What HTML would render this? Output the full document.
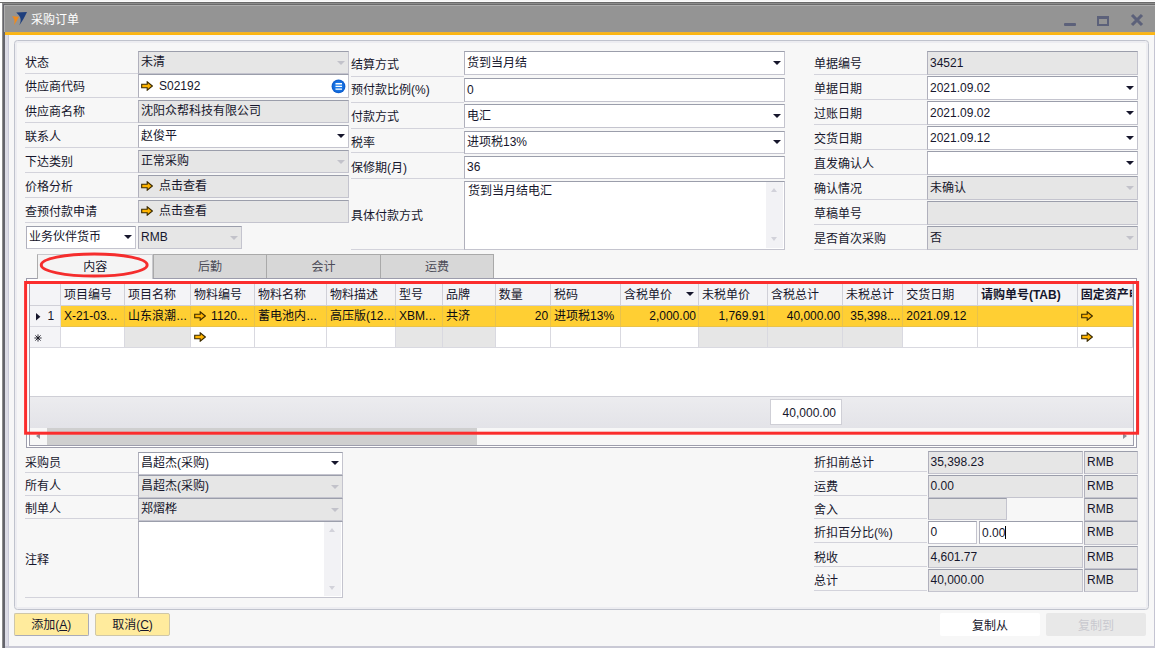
<!DOCTYPE html><html lang="zh-CN"><head><meta charset="utf-8"><title>采购订单</title><style>
*{box-sizing:border-box;margin:0;padding:0}
html,body{width:1155px;height:648px;overflow:hidden;background:#f7f7f7}
body{position:relative;font-family:"Liberation Sans","Noto Sans CJK SC",sans-serif;font-size:12px;color:#16162c;line-height:1}
.a{position:absolute}
.lbl{position:absolute;white-space:nowrap;border-bottom:1px solid #d3d3db;padding-top:5px}
.f{position:absolute;white-space:nowrap;overflow:hidden;border:1px solid #c4c4ce;border-top-color:#9b9eab;border-left-color:#b0b0bc;background:#fff;padding:4px 0 0 2px}
.d{background:#e6e6e6}
.arr{position:absolute;width:0;height:0;margin-left:-0.5px;border-left:4px solid transparent;border-right:4px solid transparent;border-top:4px solid #16162c}
.arr.g{border-top-color:#c2c2ca}
.tab{position:absolute;top:254px;height:24px;background:#d7d7d7;border:1px solid #a9a9a9;border-bottom:none;text-align:center;padding-top:6px;color:#4c4c58}
.th{position:absolute;top:283px;height:22.5px;background:#f4f4f7;border-right:1px solid #d0d0d8;border-bottom:1px solid #d0d0d8;padding:5.5px 0 0 3px;white-space:nowrap;overflow:hidden}
.td{position:absolute;height:21px;border-right:1px solid #d9d9e0;border-bottom:1px solid #d9d9e0;padding:4px 2px 0 3px;white-space:nowrap;overflow:hidden}
.sel{color:#0a0a12;background:#ffcf33;border-right-color:#e9c24a;border-bottom-color:#e9c24a}
.r{text-align:right}
.btn{position:absolute;text-align:center;padding-top:5px;border-radius:2px}
</style></head><body>
<svg width="0" height="0" style="position:absolute"><defs><linearGradient id="lg" x1="0" y1="0" x2="0" y2="1"><stop offset="0.15" stop-color="#ffdc00"/><stop offset="0.85" stop-color="#ff9800"/></linearGradient><radialGradient id="bg" cx="0.5" cy="0.5" r="0.5"><stop offset="0.5" stop-color="#1d7be9"/><stop offset="1" stop-color="#0a59cb"/></radialGradient></defs></svg>
<div class="a" style="left:0;top:0;width:1155px;height:2px;background:linear-gradient(#f1f1f1,#fff)"></div>
<div class="a" style="left:0;top:1.8px;width:1155px;height:1.1px;background:#6a6a6a"></div>
<div class="a" style="left:2px;top:2.9px;width:1153px;height:1px;background:#8c8c8c"></div>
<div class="a" style="left:3px;top:3.9px;width:1152px;height:1px;background:#6a6a6a"></div>
<div class="a" style="left:4px;top:4.9px;width:1151px;height:1px;background:#adadad"></div>
<div class="a" style="left:4.7px;top:5.7px;width:1151px;height:26px;background:#949494"></div>
<div class="a" style="left:4.7px;top:31.5px;width:1151px;height:3.5px;background:linear-gradient(#eeb432,#fdb50f 60%)"></div>
<div class="a" style="left:0;top:3px;width:2px;height:645px;background:#fff"></div>
<div class="a" style="left:2px;top:2.9px;width:1.1px;height:646px;background:#8c8c8c"></div>
<div class="a" style="left:3px;top:3.9px;width:1.7px;height:645px;background:#64646c"></div>
<div class="a" style="left:4px;top:4.9px;width:0.8px;height:27px;background:#adadad"></div>
<div class="a" style="left:4.7px;top:35px;width:4.3px;height:613px;background:#dcdce6;border-right:0.7px solid #c9c9d8"></div>
<div class="a" style="left:1154px;top:35px;width:1px;height:613px;background:#c4c4d2"></div>
<div class="a" style="left:4.7px;top:646px;width:1151px;height:2px;background:#c9c9d5"></div>
<svg class="a" style="left:0;top:0" width="40" height="32" viewBox="0 0 40 32"><path d="M16.2 12.6 L27 12 C25 16.5 22.5 21 19.3 25.2 C21.5 21 21.5 17 16.2 12.6Z" fill="#1d3e7d"/><path d="M12 16.2 L19 16.8 C17.8 19 16 22.5 13.9 25.2 C15 22 15 18.8 12 16.2Z" fill="#f08a1c"/></svg>
<div class="a" style="left:31px;top:14px;color:#fff;font-size:12px;white-space:nowrap">采购订单</div>
<div class="a" style="left:1063.5px;top:23px;width:12px;height:3px;background:#5c617a;border-radius:1px"></div>
<div class="a" style="left:1097px;top:16px;width:12px;height:10px;border:2px solid #5c617a;border-top-width:3px"></div>
<svg class="a" style="left:1130px;top:13px" width="14" height="14" viewBox="0 0 14 14"><path d="M2 2 L12 12 M12 2 L2 12" stroke="#5c617a" stroke-width="3.1" fill="none"/></svg>
<div class="a" style="left:14px;top:40px;width:1135px;height:570px;border:1px solid #c0c3cd;border-radius:3.5px;box-shadow:inset 0 0 0 2px #ededf1"></div>
<div class="lbl" style="left:25px;top:52px;width:113px;height:22px;padding-top:5px">状态</div>
<div class="lbl" style="left:25px;top:76px;width:113px;height:22px;padding-top:5px">供应商代码</div>
<div class="lbl" style="left:25px;top:100.5px;width:113px;height:22px;padding-top:5px">供应商名称</div>
<div class="lbl" style="left:25px;top:125.5px;width:113px;height:22px;padding-top:5px">联系人</div>
<div class="lbl" style="left:25px;top:150.5px;width:113px;height:22px;padding-top:5px">下达类别</div>
<div class="lbl" style="left:25px;top:175.5px;width:113px;height:22px;padding-top:5px">价格分析</div>
<div class="lbl" style="left:25px;top:200.5px;width:113px;height:22px;padding-top:5px">查预付款申请</div>
<div class="f d" style="left:138px;top:51px;width:211px;height:23px;">未清</div>
<div class="arr g" style="left:337px;top:61px"></div>
<div class="f " style="left:138px;top:74px;width:211px;height:24px;padding-top:5px"><svg width="12" height="10" viewBox="0 0 12 10" style="vertical-align:-1px;margin-right:6px"><path d="M0.7 3.2 H6.2 V0.8 L11.3 5 L6.2 9.2 V6.8 H0.7 Z" fill="#ffb400" stroke="#3a2a00" stroke-width="1.1" stroke-linejoin="miter"/></svg>S02192</div>
<div class="f d" style="left:138px;top:99.5px;width:211px;height:23px;">沈阳众帮科技有限公司</div>
<div class="f " style="left:138px;top:124.5px;width:211px;height:23px;">赵俊平</div>
<div class="arr " style="left:337px;top:133.8px"></div>
<div class="f d" style="left:138px;top:149.5px;width:211px;height:23px;">正常采购</div>
<div class="arr g" style="left:337px;top:159.5px"></div>
<div class="f d" style="left:138px;top:174.5px;width:211px;height:23px;"><svg width="12" height="10" viewBox="0 0 12 10" style="vertical-align:-1px;margin-right:6px"><path d="M0.7 3.2 H6.2 V0.8 L11.3 5 L6.2 9.2 V6.8 H0.7 Z" fill="#ffb400" stroke="#3a2a00" stroke-width="1.1" stroke-linejoin="miter"/></svg>点击查看</div>
<div class="f d" style="left:138px;top:199.5px;width:211px;height:23px;"><svg width="12" height="10" viewBox="0 0 12 10" style="vertical-align:-1px;margin-right:6px"><path d="M0.7 3.2 H6.2 V0.8 L11.3 5 L6.2 9.2 V6.8 H0.7 Z" fill="#ffb400" stroke="#3a2a00" stroke-width="1.1" stroke-linejoin="miter"/></svg>点击查看</div>
<div class="f " style="left:26px;top:225.5px;width:110px;height:23px;">业务伙伴货币</div>
<div class="arr " style="left:124px;top:234.8px"></div>
<div class="f d" style="left:138px;top:225.5px;width:104px;height:23px;">RMB</div>
<div class="arr g" style="left:230px;top:235.5px"></div>
<svg class="a" style="left:330.5px;top:78.5px" width="15" height="15" viewBox="0 0 15 15"><circle cx="7.5" cy="7.4" r="6.9" fill="url(#bg)"/><path d="M4.5 4.8h6.5M4.5 7.4h6.5M4.5 10.1h6.5" stroke="#fff" stroke-width="1.4"/></svg>
<div class="lbl" style="left:351px;top:57.8px;width:113px;height:19.1px;padding-top:1px">结算方式</div>
<div class="lbl" style="left:351px;top:83.4px;width:113px;height:19.4px;padding-top:1px">预付款比例(%)</div>
<div class="lbl" style="left:351px;top:110px;width:113px;height:18.9px;padding-top:1px">付款方式</div>
<div class="lbl" style="left:351px;top:135.9px;width:113px;height:17.6px;padding-top:1px">税率</div>
<div class="lbl" style="left:351px;top:161px;width:113px;height:17.5px;padding-top:1px">保修期(月)</div>
<div class="lbl" style="left:351px;top:208.8px;width:434px;height:41.2px;padding-top:1px">具体付款方式</div>
<div class="f " style="left:464px;top:51px;width:321px;height:23.5px;padding-top:5px">货到当月结</div>
<div class="arr " style="left:773px;top:60.55px"></div>
<div class="f " style="left:464px;top:78px;width:321px;height:23.5px;padding-top:4.7px">0</div>
<div class="f " style="left:464px;top:104px;width:321px;height:23.5px;padding-top:5px">电汇</div>
<div class="arr " style="left:773px;top:113.55px"></div>
<div class="f " style="left:464px;top:130.5px;width:321px;height:23px;">进项税13%</div>
<div class="arr " style="left:773px;top:139.8px"></div>
<div class="f " style="left:464px;top:155.5px;width:321px;height:23px;">36</div>
<div class="f " style="left:464px;top:180.5px;width:321px;height:69px;padding-left:3px;padding-top:3.5px">货到当月结电汇</div>
<div class="a" style="left:766px;top:182px;width:17px;height:66px;background:#f2f2f5"></div>
<div class="a" style="left:771px;top:188px;width:0;height:0;border-left:3.5px solid transparent;border-right:3.5px solid transparent;border-bottom:4px solid #d2d2da"></div>
<div class="a" style="left:771px;top:237px;width:0;height:0;border-left:3.5px solid transparent;border-right:3.5px solid transparent;border-top:4px solid #d2d2da"></div>
<div class="lbl" style="left:814px;top:51.5px;width:113px;height:23px;padding-top:6px">单据编号</div>
<div class="lbl" style="left:814px;top:76.5px;width:113px;height:23px;padding-top:6px">单据日期</div>
<div class="lbl" style="left:814px;top:101.5px;width:113px;height:23px;padding-top:6px">过账日期</div>
<div class="lbl" style="left:814px;top:126.5px;width:113px;height:23px;padding-top:6px">交货日期</div>
<div class="lbl" style="left:814px;top:151.5px;width:113px;height:23px;padding-top:6px">直发确认人</div>
<div class="lbl" style="left:814px;top:176.5px;width:113px;height:23px;padding-top:6px">确认情况</div>
<div class="lbl" style="left:814px;top:201.5px;width:113px;height:23px;padding-top:6px">草稿单号</div>
<div class="lbl" style="left:814px;top:226.5px;width:113px;height:23px;padding-top:6px">是否首次采购</div>
<div class="f d" style="left:927px;top:51.3px;width:211px;height:23.3px;padding-top:4.7px">34521</div>
<div class="f " style="left:927px;top:76.3px;width:211px;height:23.3px;padding-top:4.7px">2021.09.02</div>
<div class="arr " style="left:1126px;top:85.75px"></div>
<div class="f " style="left:927px;top:101.3px;width:211px;height:23.3px;padding-top:4.7px">2021.09.02</div>
<div class="arr " style="left:1126px;top:110.75px"></div>
<div class="f " style="left:927px;top:126.3px;width:211px;height:23.3px;padding-top:4.7px">2021.09.12</div>
<div class="arr " style="left:1126px;top:135.75px"></div>
<div class="f " style="left:927px;top:151.3px;width:211px;height:23.3px;padding-top:4.7px"></div>
<div class="arr " style="left:1126px;top:160.75px"></div>
<div class="f d" style="left:927px;top:176.3px;width:211px;height:23.3px;padding-top:4.7px">未确认</div>
<div class="arr g" style="left:1126px;top:186.45px"></div>
<div class="f d" style="left:927px;top:201.3px;width:211px;height:23.3px;padding-top:4.7px"></div>
<div class="f d" style="left:927px;top:226.3px;width:211px;height:23.3px;padding-top:4.7px">否</div>
<div class="arr g" style="left:1126px;top:236.45px"></div>
<div class="tab" style="left:37.3px;width:115.7px;height:25px;background:#f4f4f4;border-color:#c8c8cc;border-left-color:#adadad;color:#16162c;z-index:3">内容</div>
<div class="tab" style="left:153px;width:114px">后勤</div>
<div class="tab" style="left:266px;width:115px">会计</div>
<div class="tab" style="left:380px;width:114px">运费</div>
<div class="a" style="left:26px;top:278px;width:1111.2px;height:170px;border:1px solid #9d9dac;background:#fff"></div>
<div class="a" style="left:29px;top:281px;width:1105px;height:165px;border:1px solid #9d9dac;background:#fff"></div>
<div class="th" style="left:30px;width:30.9px"></div>
<div class="td" style="left:30px;top:305.5px;width:30.9px;background:#f4f4f7;padding-left:0"><svg style="position:absolute;left:5.7px;top:7.2px" width="5" height="8" viewBox="0 0 5 8"><path d="M0 0L4.4 3.7L0 7.4Z" fill="#16162c"/></svg><span style="position:absolute;left:17.5px;top:4px">1</span></div>
<div class="td" style="left:30px;top:326.5px;width:30.9px;background:#f4f4f7;padding:0"><svg style="position:absolute;left:3.5px;top:7px" width="8" height="8" viewBox="-4 -4 8 8"><path d="M-3.6 0H3.6M0 -3.6V3.6M-2.6 -2.6L2.6 2.6M-2.6 2.6L2.6 -2.6" stroke="#15151f" stroke-width="0.9" fill="none"/></svg></div>
<div class="th" style="left:60.9px;width:64.1px">项目编号</div>
<div class="td sel" style="left:60.9px;top:305.5px;width:64.1px">X-21-03<span style="letter-spacing:0.4px">...</span></div>
<div class="td" style="left:60.9px;top:326.5px;width:64.1px;background:#fff"></div>
<div class="th" style="left:125px;width:66.1px">项目名称</div>
<div class="td sel" style="left:125px;top:305.5px;width:66.1px">山东浪潮<span style="letter-spacing:0.1px;margin-left:0.5px">...</span></div>
<div class="td" style="left:125px;top:326.5px;width:66.1px;background:#e6e6e6"></div>
<div class="th" style="left:191.1px;width:64px">物料编号</div>
<div class="td sel" style="left:191.1px;top:305.5px;width:64px"><svg width="12" height="10" viewBox="0 0 12 10" style="vertical-align:-1px;margin-right:5px"><path d="M0.7 3.2 H6.2 V0.8 L11.3 5 L6.2 9.2 V6.8 H0.7 Z" fill="#ffb400" stroke="#3a2a00" stroke-width="1.1" stroke-linejoin="miter"/></svg>1120<span style="letter-spacing:0.4px">...</span></div>
<div class="td" style="left:191.1px;top:326.5px;width:64px;background:#fff"><svg width="12" height="10" viewBox="0 0 12 10" style="vertical-align:-1px;margin-right:6px"><path d="M0.7 3.2 H6.2 V0.8 L11.3 5 L6.2 9.2 V6.8 H0.7 Z" fill="#ffb400" stroke="#3a2a00" stroke-width="1.1" stroke-linejoin="miter"/></svg></div>
<div class="th" style="left:255.1px;width:72px">物料名称</div>
<div class="td sel" style="left:255.1px;top:305.5px;width:72px">蓄电池内<span style="letter-spacing:0.1px;margin-left:0.5px">...</span></div>
<div class="td" style="left:255.1px;top:326.5px;width:72px;background:#fff"></div>
<div class="th" style="left:327.1px;width:69px">物料描述</div>
<div class="td sel" style="left:327.1px;top:305.5px;width:69px">高压版(12<span style="letter-spacing:0.4px">...</span></div>
<div class="td" style="left:327.1px;top:326.5px;width:69px;background:#fff"></div>
<div class="th" style="left:396.1px;width:47px">型号</div>
<div class="td sel" style="left:396.1px;top:305.5px;width:47px">XBM<span style="letter-spacing:0.4px">...</span></div>
<div class="td" style="left:396.1px;top:326.5px;width:47px;background:#e6e6e6"></div>
<div class="th" style="left:443.1px;width:52.7px">品牌</div>
<div class="td sel" style="left:443.1px;top:305.5px;width:52.7px">共济</div>
<div class="td" style="left:443.1px;top:326.5px;width:52.7px;background:#e6e6e6"></div>
<div class="th" style="left:495.8px;width:55.3px">数量</div>
<div class="td sel r" style="left:495.8px;top:305.5px;width:55.3px">20</div>
<div class="td" style="left:495.8px;top:326.5px;width:55.3px;background:#fff"></div>
<div class="th" style="left:551.1px;width:69.8px">税码</div>
<div class="td sel" style="left:551.1px;top:305.5px;width:69.8px">进项税13%</div>
<div class="td" style="left:551.1px;top:326.5px;width:69.8px;background:#fff"></div>
<div class="th" style="left:620.9px;width:78.1px">含税单价</div>
<div class="td sel r" style="left:620.9px;top:305.5px;width:78.1px">2,000.00</div>
<div class="td" style="left:620.9px;top:326.5px;width:78.1px;background:#fff"></div>
<div class="th" style="left:699px;width:69.1px">未税单价</div>
<div class="td sel r" style="left:699px;top:305.5px;width:69.1px">1,769.91</div>
<div class="td" style="left:699px;top:326.5px;width:69.1px;background:#e6e6e6"></div>
<div class="th" style="left:768.1px;width:75px">含税总计</div>
<div class="td sel r" style="left:768.1px;top:305.5px;width:75px">40,000.00</div>
<div class="td" style="left:768.1px;top:326.5px;width:75px;background:#e6e6e6"></div>
<div class="th" style="left:843.1px;width:60.2px">未税总计</div>
<div class="td sel r" style="left:843.1px;top:305.5px;width:60.2px">35,398....</div>
<div class="td" style="left:843.1px;top:326.5px;width:60.2px;background:#e6e6e6"></div>
<div class="th" style="left:903.3px;width:74.6px">交货日期</div>
<div class="td sel" style="left:903.3px;top:305.5px;width:74.6px">2021.09.12</div>
<div class="td" style="left:903.3px;top:326.5px;width:74.6px;background:#fff"></div>
<div class="th" style="left:977.9px;width:99.9px"><b>请购单号(TAB)</b></div>
<div class="td sel" style="left:977.9px;top:305.5px;width:99.9px"></div>
<div class="td" style="left:977.9px;top:326.5px;width:99.9px;background:#fff"></div>
<div class="th" style="left:1077.8px;width:55.2px"><b>固定资产申购单号</b></div>
<div class="td sel" style="left:1077.8px;top:305.5px;width:55.2px"><svg width="12" height="10" viewBox="0 0 12 10" style="vertical-align:-1px;margin-right:6px"><path d="M0.7 3.2 H6.2 V0.8 L11.3 5 L6.2 9.2 V6.8 H0.7 Z" fill="#ffb400" stroke="#3a2a00" stroke-width="1.1" stroke-linejoin="miter"/></svg></div>
<div class="td" style="left:1077.8px;top:326.5px;width:55.2px;background:#fff"><svg width="12" height="10" viewBox="0 0 12 10" style="vertical-align:-1px;margin-right:6px"><path d="M0.7 3.2 H6.2 V0.8 L11.3 5 L6.2 9.2 V6.8 H0.7 Z" fill="#ffb400" stroke="#3a2a00" stroke-width="1.1" stroke-linejoin="miter"/></svg></div>
<div class="arr" style="left:686px;top:291.8px"></div>
<div class="a" style="left:30px;top:396px;width:1103px;height:32px;background:linear-gradient(#ececef,#e3e3e8);border-top:1px solid #cfcfd6"></div>
<div class="a r" style="left:770px;top:399px;width:72px;height:26px;background:#fff;border:1px solid #cfcfd6;padding:7px 5px 0 0">40,000.00</div>
<div class="a" style="left:30px;top:428px;width:1103px;height:17px;background:#f7f7f7"></div>
<div class="a" style="left:47px;top:428px;width:430px;height:17px;background:#cfcfcf"></div>
<div class="a" style="left:36px;top:433px;width:0;height:0;border-top:3px solid transparent;border-bottom:3px solid transparent;border-right:4px solid #8d8d97"></div>
<div class="a" style="left:1123px;top:433px;width:0;height:0;border-top:3px solid transparent;border-bottom:3px solid transparent;border-left:4px solid #8d8d97"></div>
<svg class="a" style="left:0;top:0;z-index:5;pointer-events:none" width="1155" height="648"><ellipse cx="94.2" cy="265" rx="53" ry="11" fill="none" stroke="#f52d2d" stroke-width="2.8"/><rect x="25.6" y="282.5" width="1112" height="150.7" fill="none" stroke="#fb2d2d" stroke-width="3"/></svg>
<div class="lbl" style="left:25px;top:451.5px;width:113px;height:21.5px;padding-top:5px">采购员</div>
<div class="lbl" style="left:25px;top:474.5px;width:113px;height:21.5px;padding-top:5px">所有人</div>
<div class="lbl" style="left:25px;top:497.5px;width:113px;height:21.5px;padding-top:5px">制单人</div>
<div class="lbl" style="left:25px;top:521px;width:113px;height:77px;padding-top:33px">注释</div>
<div class="f " style="left:138px;top:451.5px;width:205px;height:23px;">昌超杰(采购)</div>
<div class="arr " style="left:331px;top:460.8px"></div>
<div class="f d" style="left:138px;top:474.5px;width:205px;height:23px;">昌超杰(采购)</div>
<div class="arr g" style="left:331px;top:484.5px"></div>
<div class="f d" style="left:138px;top:497.5px;width:205px;height:23px;">郑熠桦</div>
<div class="arr g" style="left:331px;top:507.5px"></div>
<div class="f " style="left:138px;top:520.5px;width:205px;height:77px;"></div>
<div class="a" style="left:324px;top:522px;width:17px;height:74px;background:#f2f2f5"></div>
<div class="a" style="left:329px;top:528px;width:0;height:0;border-left:3.5px solid transparent;border-right:3.5px solid transparent;border-bottom:4px solid #d2d2da"></div>
<div class="a" style="left:329px;top:586px;width:0;height:0;border-left:3.5px solid transparent;border-right:3.5px solid transparent;border-top:4px solid #d2d2da"></div>
<div class="lbl" style="left:814px;top:451.3px;width:113px;height:21px;padding-top:6px">折扣前总计</div>
<div class="lbl" style="left:814px;top:474.5px;width:113px;height:21px;padding-top:6px">运费</div>
<div class="lbl" style="left:814px;top:497.5px;width:113px;height:21px;padding-top:6px">舍入</div>
<div class="lbl" style="left:814px;top:520.5px;width:113px;height:22.5px;padding-top:6px">折扣百分比(%)</div>
<div class="lbl" style="left:814px;top:545.5px;width:113px;height:21.5px;padding-top:6px">税收</div>
<div class="lbl" style="left:814px;top:569px;width:113px;height:21.5px;padding-top:6px">总计</div>
<div class="f d" style="left:927.5px;top:451.3px;width:155px;height:23px;">35,398.23</div>
<div class="f d" style="left:927.5px;top:474.5px;width:155px;height:23px;">0.00</div>
<div class="f d" style="left:927.5px;top:497.5px;width:79px;height:22.5px;"></div>
<div class="f " style="left:927.5px;top:520.5px;width:49px;height:23.5px;">0</div>
<div class="f " style="left:979px;top:520.5px;width:103.5px;height:23.5px;">0.00<span style="display:inline-block;width:1px;height:13px;background:#000;vertical-align:-2px"></span></div>
<div class="f d" style="left:927.5px;top:545.5px;width:155px;height:22.5px;">4,601.77</div>
<div class="f d" style="left:927.5px;top:569px;width:155px;height:22.5px;">40,000.00</div>
<div class="f d" style="left:1084px;top:451.3px;width:54px;height:23px;">RMB</div>
<div class="f d" style="left:1084px;top:474.5px;width:54px;height:23px;">RMB</div>
<div class="f d" style="left:1084px;top:497.5px;width:54px;height:23px;">RMB</div>
<div class="f d" style="left:1084px;top:520.5px;width:54px;height:24.5px;">RMB</div>
<div class="f d" style="left:1084px;top:545.5px;width:54px;height:23px;">RMB</div>
<div class="f d" style="left:1084px;top:569px;width:54px;height:22.5px;">RMB</div>
<div class="btn" style="left:14px;top:613px;width:74.5px;height:22.5px;background:#ffeb9d;border:1px solid #cfc7a8;border-right-color:#a9abb8;border-bottom-color:#a9abb8">添加(<u>A</u>)</div>
<div class="btn" style="left:95px;top:613px;width:75px;height:22.5px;background:#ffeb9d;border:1px solid #cfc7a8">取消(<u>C</u>)</div>
<div class="btn" style="left:940px;top:613px;width:100px;height:23px;background:#fff;padding-top:6.5px">复制从</div>
<div class="btn" style="left:1046px;top:613px;width:100px;height:23px;background:#e8e8e8;color:#c9c9cf;padding-top:6.5px">复制到</div>
</body></html>
